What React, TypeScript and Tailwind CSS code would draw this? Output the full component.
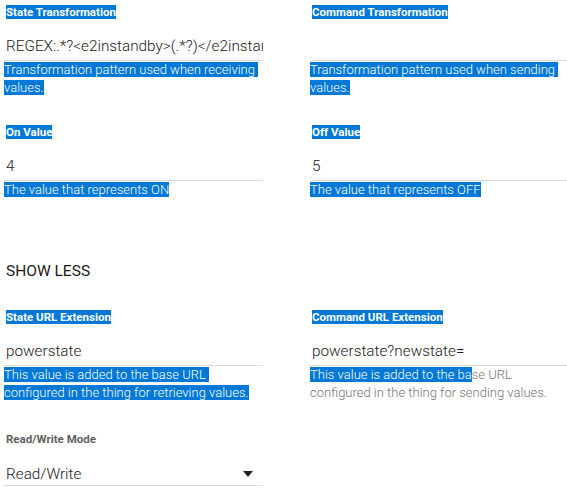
import React from "react";

const HL = "bg-[#0078d7] text-white";

function Label({ text, hl = true }: { text: string; hl?: boolean }) {
  return (
    <div className="h-[14px] pl-[2px] text-[11.5px] font-bold leading-[14px]">
      <span className={hl ? HL : "text-[#5f5f5f]"}>{text}</span>
    </div>
  );
}

function Input({ value }: { value: string }) {
  return (
    <div className="overflow-hidden whitespace-nowrap border-b border-[#dcdcdc] pb-[4px] pl-[2px] pt-[17px] text-[15.3px] font-light leading-[20px] text-[#1a1a1a]">
      {value || "\u00a0"}
    </div>
  );
}

function Field({
  label,
  value,
  children,
}: {
  label: string;
  value: string;
  children: React.ReactNode;
}) {
  return (
    <div className="flex flex-col">
      <Label text={label} />
      <Input value={value} />
      <div className="whitespace-nowrap text-[13px] font-light leading-[18px] text-[#757575]">
        {children}
      </div>
    </div>
  );
}

export default function App() {
  return (
    <div
      className="min-h-[500px] w-[567px] overflow-hidden bg-white px-[4px] pt-[5px]"
      style={{ fontFamily: "Roboto, 'Noto Sans', sans-serif" }}
    >
      <div className="grid grid-cols-[259px_259px] gap-x-[47px]">
        <Field label="State Transformation" value="REGEX:.*?<e2instandby>(.*?)</e2instandby>">
          <span className={HL}>Transformation pattern used when receiving&nbsp;</span>
          <br />
          <span className={HL}>values.</span>
        </Field>
        <Field label="Command Transformation" value="">
          <span className={HL}>Transformation pattern used when sending&nbsp;</span>
          <br />
          <span className={HL}>values.</span>
        </Field>
      </div>

      <div className="mt-[28px] grid grid-cols-[259px_259px] gap-x-[47px]">
        <Field label="On Value" value="4">
          <span className={HL}>The value that represents ON</span>
        </Field>
        <Field label="Off Value" value="5">
          <span className={HL}>The value that represents OFF</span>
        </Field>
      </div>

      <div className="mt-[60px] pl-[2px] text-[15.5px] font-normal leading-[24px] text-[#1a1a1a]">
        SHOW LESS
      </div>

      <div className="mt-[27px] grid grid-cols-[259px_259px] gap-x-[47px]">
        <Field label="State URL Extension" value="powerstate">
          <span className={HL}>This value is added to the base URL&nbsp;</span>
          <br />
          <span className={HL}>configured in the thing for retrieving values.</span>
        </Field>
        <Field label="Command URL Extension" value="powerstate?newstate=">
          <span className={HL}>This value is added to the ba</span>
          <span>se URL</span>
          <br />
          <span>configured in the thing for sending values.</span>
        </Field>
      </div>

      <div className="mt-[30px] w-[259px]">
        <Label text="Read/Write Mode" hl={false} />
        <div className="flex items-center justify-between border-b border-[#dcdcdc] pb-[1px] pl-[2px] pt-[18px] text-[15.3px] font-light leading-[20px] text-[#1a1a1a]">
          <span>Read/Write</span>
          <span className="mr-[10px] h-0 w-0 border-l-[5px] border-r-[5px] border-t-[6px] border-l-transparent border-r-transparent border-t-[#212121]" />
        </div>
      </div>
    </div>
  );
}
